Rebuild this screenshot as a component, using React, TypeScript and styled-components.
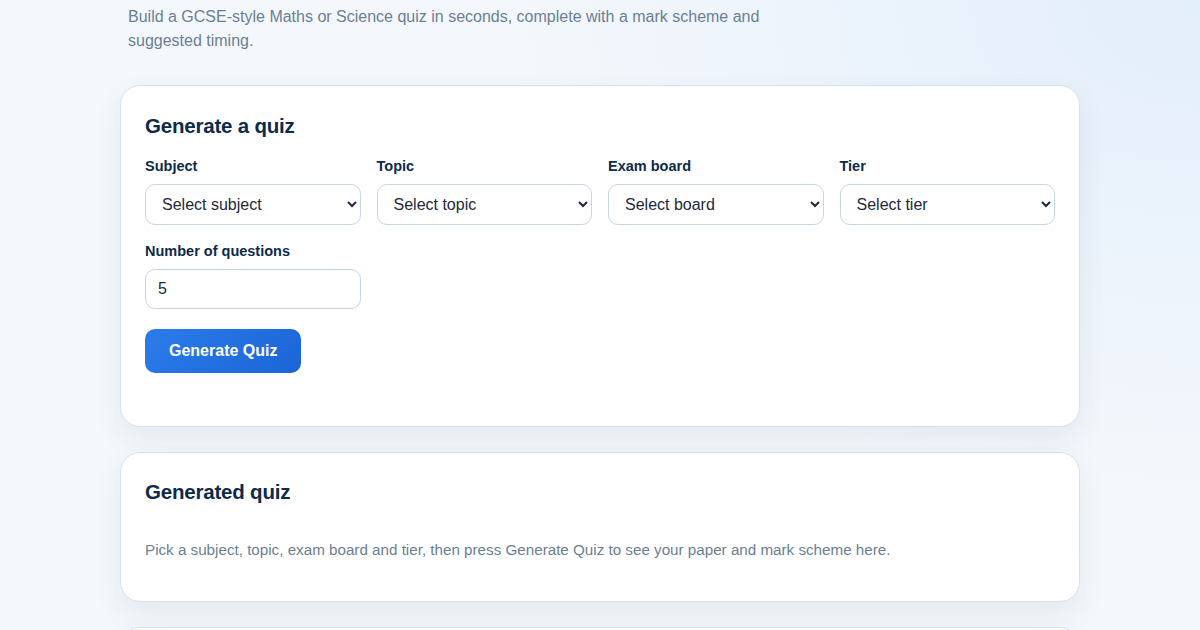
import React from "react";
import styled, { createGlobalStyle } from "styled-components";

const Global = createGlobalStyle`
  html, body { margin: 0; padding: 0; }
  body {
    font-family: "Liberation Sans", Arial, sans-serif;
    min-height: 100vh;
    background:
      radial-gradient(ellipse 700px 500px at 100% 0%, #e3eefb 0%, rgba(227,238,251,0) 100%),
      #f4f8fc;
    color: #0f2a4a;
  }
`;

const Page = styled.main`
  width: 960px;
  margin: 0 auto;
  padding-top: 5px;
  display: flex;
  flex-direction: column;
`;

const Subtitle = styled.p`
  margin: 0 0 32px 8px;
  max-width: 660px;
  font-size: 16px;
  line-height: 24px;
  color: #6b7f95;
`;

const Card = styled.section<{ $top?: number; $bottom?: number }>`
  background: #fff;
  border: 1px solid #d5e2ed;
  border-radius: 20px;
  box-shadow: 0 12px 30px rgba(15, 42, 74, 0.07);
  padding: ${(p) => p.$top ?? 25}px 24px ${(p) => p.$bottom ?? 24}px;
  margin-bottom: 25px;
`;

const PlaceholderCard = styled(Card)`
  min-height: 120px;
`;

const CardTitle = styled.h2`
  margin: 0;
  font-size: 20.5px;
  line-height: 30px;
  font-weight: 700;
  color: #0d2a4b;
  letter-spacing: -0.2px;
`;

const Grid = styled.div`
  display: grid;
  grid-template-columns: repeat(4, minmax(0, 1fr));
  gap: 17px 16px;
  margin-top: 16px;
`;

const Field = styled.label`
  display: flex;
  flex-direction: column;
  gap: 9px;
  min-width: 0;
`;

const Label = styled.span`
  font-size: 14.5px;
  line-height: 18px;
  font-weight: 700;
  color: #0d2a4b;
`;

const Select = styled.select`
  width: 100%;
  height: 41px;
  box-sizing: border-box;
  border: 1px solid #c3d6e6;
  border-radius: 10px;
  background: #fff;
  padding: 0 8px 0 12px;
  font-family: "Liberation Sans", Arial, sans-serif;
  font-size: 16px;
  color: #1e293b;
`;

const Input = styled.input`
  width: 100%;
  height: 40px;
  box-sizing: border-box;
  border: 1px solid #c3d6e6;
  border-radius: 10px;
  background: #fff;
  padding: 0 12px;
  font-family: "Liberation Sans", Arial, sans-serif;
  font-size: 16px;
  color: #1e293b;
`;

const Button = styled.button`
  align-self: flex-start;
  margin-top: 20px;
  height: 44px;
  padding: 0 24px;
  border: none;
  border-radius: 10px;
  background: linear-gradient(135deg, #2b7ceb 0%, #1b65d6 100%);
  color: #fff;
  font-family: "Liberation Sans", Arial, sans-serif;
  font-size: 16px;
  font-weight: 700;
`;

const Form = styled.div`
  display: flex;
  flex-direction: column;
`;

const Empty = styled.p`
  margin: 32px 0 0;
  font-size: 15.2px;
  line-height: 22px;
  color: #6b7f95;
`;

export default function App() {
  return (
    <>
      <Global />
      <Page>
        <Subtitle>
          Build a GCSE-style Maths or Science quiz in seconds, complete with a mark scheme and
          suggested timing.
        </Subtitle>
        <Card $bottom={53}>
          <CardTitle>Generate a quiz</CardTitle>
          <Form>
            <Grid>
              <Field>
                <Label>Subject</Label>
                <Select defaultValue="">
                  <option value="">Select subject</option>
                </Select>
              </Field>
              <Field>
                <Label>Topic</Label>
                <Select defaultValue="">
                  <option value="">Select topic</option>
                </Select>
              </Field>
              <Field>
                <Label>Exam board</Label>
                <Select defaultValue="">
                  <option value="">Select board</option>
                </Select>
              </Field>
              <Field>
                <Label>Tier</Label>
                <Select defaultValue="">
                  <option value="">Select tier</option>
                </Select>
              </Field>
              <Field>
                <Label>Number of questions</Label>
                <Input type="text" defaultValue="5" />
              </Field>
            </Grid>
            <Button>Generate Quiz</Button>
          </Form>
        </Card>
        <Card $top={24} $bottom={40}>
          <CardTitle>Generated quiz</CardTitle>
          <Empty>
            Pick a subject, topic, exam board and tier, then press Generate Quiz to see your paper
            and mark scheme here.
          </Empty>
        </Card>
        <PlaceholderCard />
      </Page>
    </>
  );
}
